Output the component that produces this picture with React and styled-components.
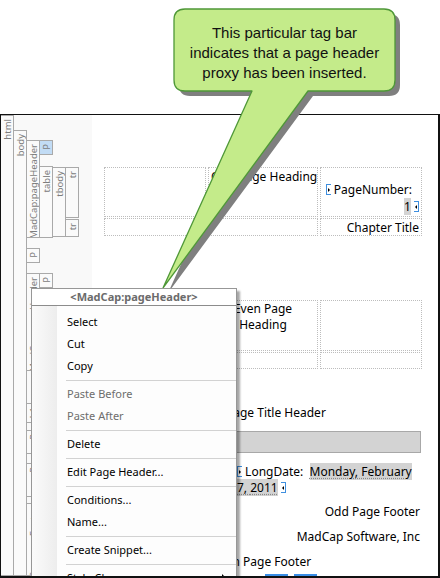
import React from 'react';
import styled, { createGlobalStyle } from 'styled-components';

const GlobalStyle = createGlobalStyle`
  html, body { margin: 0; padding: 0; background: #fff; }
  body { font-family: "Noto Sans", "DejaVu Sans", sans-serif; }
`;

const menuItems = [
  { label: 'Select' },
  { label: 'Cut' },
  { label: 'Copy' },
  'sep',
  { label: 'Paste Before', disabled: true },
  { label: 'Paste After', disabled: true },
  'sep',
  { label: 'Delete' },
  'sep',
  { label: 'Edit Page Header...' },
  'sep',
  { label: 'Conditions...' },
  { label: 'Name...' },
  'sep',
  { label: 'Create Snippet...' },
  'sep',
  { label: 'Style Class', sub: true },
];

const Tag = ({ label, mt, h, active, children }) => (
  <TagNode $mt={mt} $h={h}>
    <TagLabel $active={active}>
      <span>{label}</span>
    </TagLabel>
    {children && <TagKids>{children}</TagKids>}
  </TagNode>
);

const App = () => (
  <Page>
    <GlobalStyle />
    <Frame>
      <TagBar>
        <Tag label="html">
          <Tag label="body" mt={15}>
            <Tag label="MadCap:pageHeader" mt={10} h={98}>
              <Tag label="P" h={15} active />
              <Tag label="table" mt={11} h={72}>
                <Tag label="tbody" mt={1} h={70}>
                  <Tag label="tr" h={51} />
                  <Tag label="tr" mt={1} h={18} />
                </Tag>
              </Tag>
            </Tag>
            <Tag label="P" mt={10} h={15} />
            <Tag label="MadCap:pageHeader" mt={10} h={98}>
              <Tag label="P" h={15} />
              <Tag label="table" mt={11} h={72}>
                <Tag label="tbody" mt={1} h={70}>
                  <Tag label="tr" h={51} />
                  <Tag label="tr" mt={1} h={18} />
                </Tag>
              </Tag>
            </Tag>
            <Tag label="h1" mt={32} h={20} />
            <Tag label="P" mt={7} h={24} />
            <Tag label="P" mt={9} h={34} />
            <Tag label="MadCap:pageFooter" mt={6}>
              <Tag label="P" h={18} />
              <Tag label="P" mt={6} h={18} />
            </Tag>
          </Tag>
        </Tag>
      </TagBar>

      <Content>
        <EmptyPara />
        <Table $mt={11}>
          <Cell />
          <Cell $nowrap>Odd Page Heading</Cell>
          <Cell $align="right" $valign="flex-end">
            <FieldLine $mr={7}>
              <FieldMark /> PageNumber:
            </FieldLine>
            <FieldLine>
              <FieldValue>1</FieldValue> <FieldMark $end />
            </FieldLine>
          </Cell>
          <Cell />
          <Cell />
          <Cell $align="right">Chapter Title</Cell>
        </Table>

        <EmptyPara $mt={11} />
        <EmptyPara $mt={10} />

        <Table $mt={11} $rows="51px 17px">
          <Cell />
          <Cell $align="center" $pad="0 14px">Even Page Heading</Cell>
          <Cell />
          <Cell />
          <Cell />
          <Cell />
        </Table>

        <TextLine $mt={34} $pl={122} $lh={18}>Page Title Header</TextLine>
        <ShadedBar />

        <DateLine>
          <FieldMark /> LongDate:{'\u00a0\u00a0'}
          <FieldValue $dotted>Monday, February 7,{'\u00a0'}2011</FieldValue> <FieldMark $end />
        </DateLine>

        <TextLine $mt={8} $align="right">Odd Page Footer</TextLine>
        <TextLine $mt={9} $align="right">MadCap Software, Inc</TextLine>
        <TextLine $mt={9} $pl={109}>Even Page Footer</TextLine>
        <FieldTabs>
          <FieldTab />
          <FieldTab />
        </FieldTabs>
      </Content>

      <Menu>
        <MenuHeader>&lt;MadCap:pageHeader&gt;</MenuHeader>
        <MenuBody>
          {menuItems.map((item, i) =>
            item === 'sep' ? (
              <MenuSep key={i} />
            ) : (
              <MenuItem key={i} $disabled={item.disabled}>
                {item.label}
                {item.sub && <SubArrow />}
              </MenuItem>
            )
          )}
        </MenuBody>
      </Menu>
    </Frame>

    <Callout>
      <svg width="440" height="288" viewBox="0 0 440 288">
        <path
          d="M185,9 H384 Q395,9 395,20 V80 Q395,91 384,91 H308 L163,288 L252,91 H185 Q174,91 174,80 V20 Q174,9 185,9 Z"
          transform="translate(5 5)"
          fill="#7f7f7f"
        />
        <path
          d="M185,9 H384 Q395,9 395,20 V80 Q395,91 384,91 H308 L163,288 L252,91 H185 Q174,91 174,80 V20 Q174,9 185,9 Z"
          fill="#c4eb8a"
          stroke="#4f9838"
          strokeWidth="1.3"
          strokeLinejoin="round"
        />
      </svg>
      <CalloutText>
        This particular tag bar
        <br />
        indicates that a page header
        <br />
        proxy has been inserted.
      </CalloutText>
    </Callout>
  </Page>
);

export default App;

const Page = styled.div`
  position: relative;
  width: 440px;
  height: 578px;
  padding-top: 114px;
  box-sizing: border-box;
  overflow: hidden;
`;

const Frame = styled.div`
  position: relative;
  box-sizing: border-box;
  width: 440px;
  height: 464px;
  border: 2px solid #111;
  border-top-width: 1px;
  border-left-width: 1px;
  display: flex;
  overflow: hidden;
  background: #fff;
`;

const TagBar = styled.div`
  width: 91px;
  flex-shrink: 0;
  background: #f9f9f9;
  display: flex;
  flex-direction: column;
`;

const TagNode = styled.div`
  display: flex;
  flex-shrink: 0;
  margin-top: ${({ $mt }) => $mt || 0}px;
  ${({ $h }) => ($h ? `height: ${$h}px;` : 'flex: 1; min-height: 0;')}
`;

const TagKids = styled.div`
  display: flex;
  flex-direction: column;
`;

const TagLabel = styled.div`
  box-sizing: border-box;
  width: 13px;
  flex-shrink: 0;
  border: 1px solid #a9a9a9;
  border-left: none;
  background: ${({ $active }) => ($active ? '#c2dcf5' : '#fafafa')};
  display: flex;
  flex-direction: column;
  align-items: center;
  padding-top: 3px;
  overflow: hidden;
  color: #7c7c7c;
  font: 9.5px/11px "Noto Sans", sans-serif;

  span {
    writing-mode: vertical-rl;
    transform: rotate(180deg);
    white-space: nowrap;
  }
`;

const Content = styled.div`
  flex: 1;
  min-width: 0;
  padding: 25px 16px 0 12px;
  display: flex;
  flex-direction: column;
  font: 12px/16px "Noto Sans", sans-serif;
  color: #000;
`;

const EmptyPara = styled.div`
  height: 15px;
  margin-top: ${({ $mt }) => $mt || 0}px;
  flex-shrink: 0;
`;

const Table = styled.div`
  display: grid;
  grid-template-columns: 102px 110px 102px;
  grid-template-rows: ${({ $rows }) => $rows || '50px 18px'};
  column-gap: 2px;
  row-gap: 1px;
  padding: 1px 0;
  margin-top: ${({ $mt }) => $mt || 0}px;
  flex-shrink: 0;
`;

const Cell = styled.div`
  box-sizing: border-box;
  border: 1px dotted #bdbdbd;
  padding: ${({ $pad }) => $pad || '1px 2px'};
  display: flex;
  flex-direction: column;
  justify-content: ${({ $valign }) => $valign || 'flex-start'};
  text-align: ${({ $align }) => $align || 'left'};
  white-space: ${({ $nowrap }) => ($nowrap ? 'nowrap' : 'normal')};
`;

const FieldLine = styled.div`
  line-height: 17px;
  margin-right: ${({ $mr }) => $mr || 0}px;
  white-space: nowrap;
`;

const FieldMark = styled.span`
  display: inline-block;
  position: relative;
  box-sizing: border-box;
  width: 5px;
  height: 11px;
  vertical-align: -1px;
  border: 1px solid #3f8fdf;
  ${({ $end }) => ($end ? 'border-left: none;' : 'border-right: none;')}

  &::after {
    content: '';
    position: absolute;
    top: 2.5px;
    ${({ $end }) => ($end ? 'right: 1px;' : 'left: 1px;')}
    border-top: 2px solid transparent;
    border-bottom: 2px solid transparent;
    ${({ $end }) => ($end ? 'border-right: 2px solid #000;' : 'border-left: 2px solid #000;')}
  }
`;

const FieldValue = styled.span`
  background: #d3d3d3;
  ${({ $dotted }) =>
    $dotted &&
    'text-decoration: underline dotted #8a8a8a; text-underline-offset: 2px;'}
`;

const TextLine = styled.div`
  margin-top: ${({ $mt }) => $mt || 0}px;
  padding-left: ${({ $pl }) => $pl || 0}px;
  padding-right: 2px;
  line-height: ${({ $lh }) => $lh || 16}px;
  text-align: ${({ $align }) => $align || 'left'};
  white-space: nowrap;
  flex-shrink: 0;
`;

const ShadedBar = styled.div`
  box-sizing: border-box;
  height: 22px;
  margin: 9px 1px 0 0;
  background: #d3d3d3;
  border: 1px solid #a8a8a8;
  flex-shrink: 0;
`;

const DateLine = styled.div`
  margin: 11px 0 0 133px;
  line-height: 16px;
  flex-shrink: 0;
`;

const FieldTabs = styled.div`
  display: flex;
  gap: 6px;
  margin: 4px 0 0 161px;
  flex-shrink: 0;
`;

const FieldTab = styled.div`
  width: 23px;
  height: 8px;
  border-top: 2px solid #3a8ee6;
`;

const Menu = styled.div`
  position: absolute;
  left: 30px;
  top: 173px;
  width: 206px;
  box-sizing: border-box;
  border: 1px solid #979797;
  background: #fff;
  box-shadow: 3px 3px 2px rgba(0, 0, 0, 0.35);
  z-index: 3;
  font: 11px/22px "Noto Sans", sans-serif;
`;

const MenuHeader = styled.div`
  height: 16px;
  line-height: 16px;
  text-align: center;
  font-weight: 700;
  color: #6b6b6b;
  border-bottom: 1px solid #8c8c8c;
`;

const MenuBody = styled.div`
  padding-top: 5px;
  background: linear-gradient(to right, #fbfbfb 0, #ededed 25px, #fdfdfd 25px);
`;

const MenuItem = styled.div`
  position: relative;
  height: 22px;
  padding-left: 35px;
  color: ${({ $disabled }) => ($disabled ? '#6d6d6d' : '#000')};
`;

const MenuSep = styled.div`
  height: 1px;
  margin: 3px 0 2px 34px;
  background: #d2d2d2;
`;

const SubArrow = styled.span`
  position: absolute;
  right: 10px;
  top: 7px;
  border-top: 4px solid transparent;
  border-bottom: 4px solid transparent;
  border-left: 4px solid #000;
`;

const Callout = styled.div`
  position: absolute;
  left: 0;
  top: 0;
  width: 440px;
  height: 288px;
  overflow: hidden;
  pointer-events: none;
  z-index: 5;

  svg {
    position: absolute;
    left: 0;
    top: 0;
  }
`;

const CalloutText = styled.div`
  position: absolute;
  left: 174px;
  top: 23px;
  width: 221px;
  text-align: center;
  font: 15px/20px "Liberation Sans", Arial, sans-serif;
  color: #111;
`;
